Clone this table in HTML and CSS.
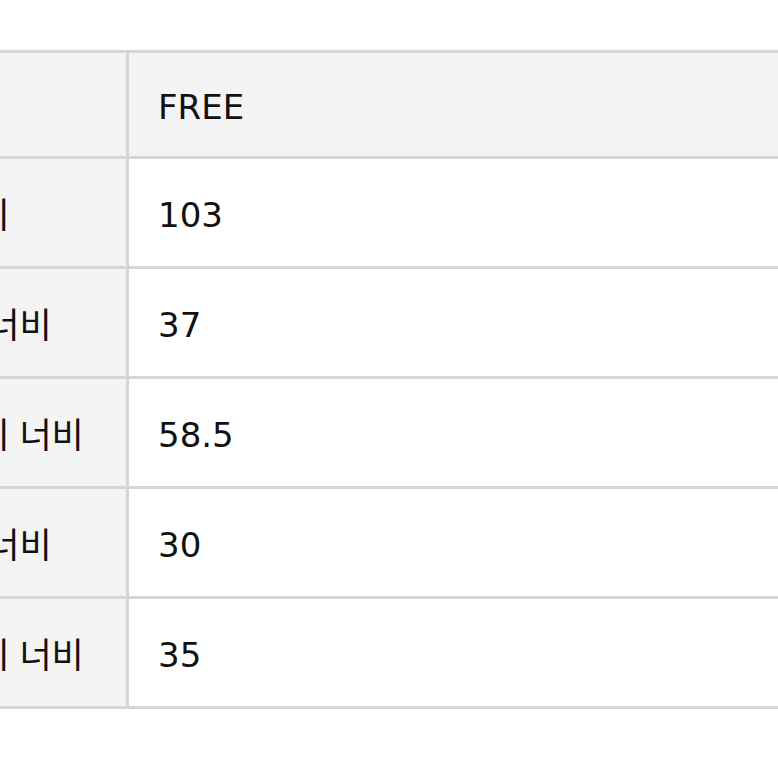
FILE: index.html
```html
<!DOCTYPE html>
<html lang="ko">
<head>
<meta charset="utf-8">
<title>사이즈표</title>
<link rel="stylesheet" href="styles.css">
</head>
<body>
<div class="page">
  <div class="size-table">
    <div class="cell head label"></div>
    <div class="cell head value">FREE</div>

    <div class="cell label">총길이</div>
    <div class="cell value">103</div>

    <div class="cell label">어깨 너비</div>
    <div class="cell value">37</div>

    <div class="cell label">엉덩이 너비</div>
    <div class="cell value">58.5</div>

    <div class="cell label">밑단 너비</div>
    <div class="cell value">30</div>

    <div class="cell label">허벅지 너비</div>
    <div class="cell value">35</div>
  </div>
</div>
</body>
</html>
```
FILE: styles.css
```css
html, body {
  margin: 0;
  padding: 0;
  background: #ffffff;
  overflow: hidden;
}

.page {
  padding-top: 50px;
}

.size-table {
  display: grid;
  grid-template-columns: 242px 1fr;
  grid-template-rows: 103px repeat(5, 107px);
  gap: 3px;
  padding: 3px 0;
  background: #d6d6d6;
  margin-left: -116px;
  width: calc(100% + 140px);
  color: #111111;
}

.cell {
  display: flex;
  align-items: center;
  padding-left: 30px;
  background: #ffffff;
  white-space: nowrap;
}

.label {
  background: #f4f4f4;
  font-family: "Noto Sans CJK KR", sans-serif;
  font-size: 35px;
  padding-left: 29px;
}

.value {
  font-family: "DejaVu Sans", "Noto Sans CJK KR", sans-serif;
  font-size: 34px;
  padding-top: 4px;
  padding-left: 29px;
}

.head {
  background: #f4f4f4;
}
```
